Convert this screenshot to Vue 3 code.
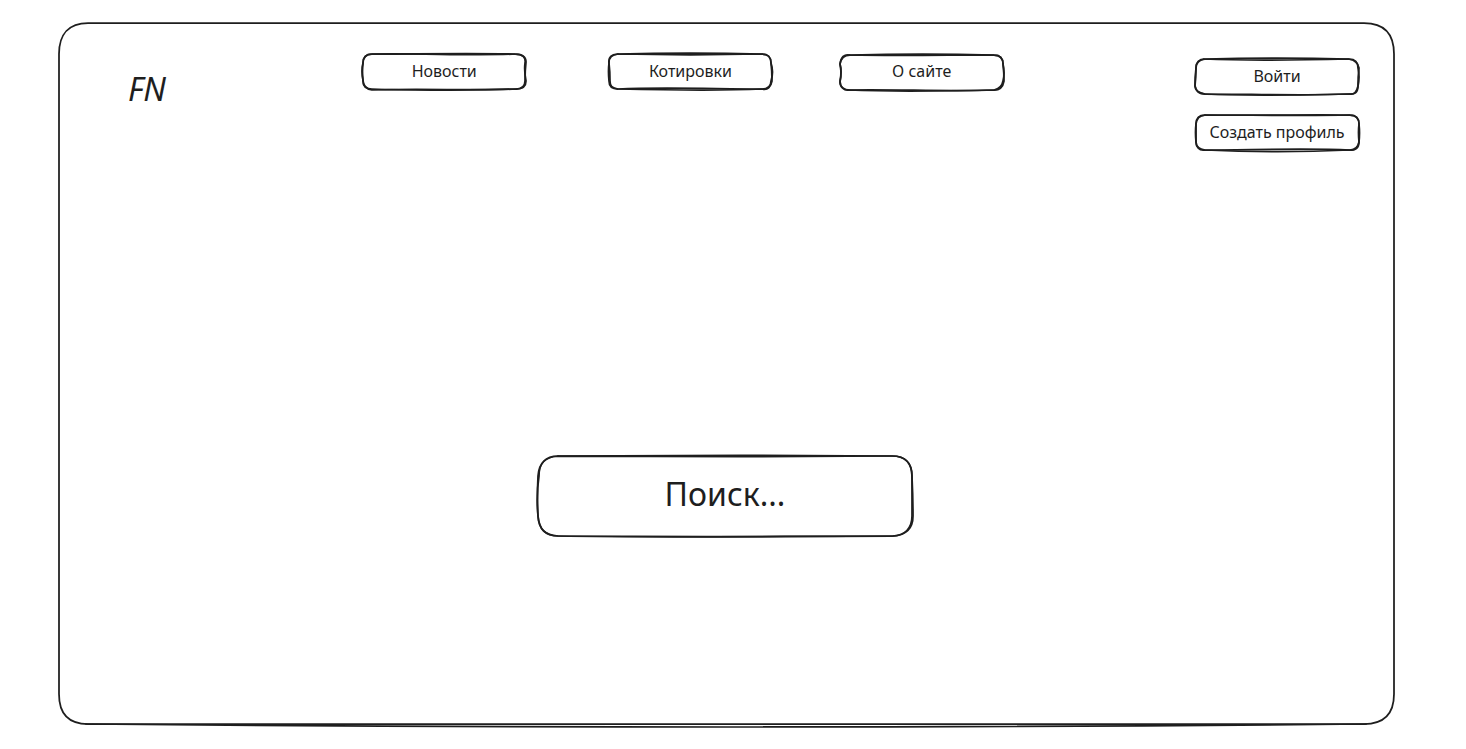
<script setup>
import { ref } from 'vue'

const query = ref('')

const links = [
  {
    label: 'Новости',
    strokes: [
      'M10 1 C60 0 110 3 154 1 C161 1 164 5 163 10 Q162 18 164 28 C164 34 160 36 154 36 C110 38 60 35 10 37 C4 36 1 33 1 27 Q-1 18 1 10 C1 4 4 1 10 1',
      'M9 1 C50 1 110 0 153 1 C160 1 164 4 164 9 Q163 18 163 28 C163 34 159 36 154 36 C110 37 55 38 10 36 C4 36 1 33 1 28 Q0 18 1 10 C1 5 4 1 9 1',
    ],
  },
  {
    label: 'Котировки',
    strokes: [
      'M9 1 C55 0 110 0 154 1 C161 1 163 4 163 10 Q166 19 163 28 C163 34 160 36 154 36 C110 36 55 34 10 36 C4 36 1 33 1 28 Q0 18 1 10 C0 4 4 1 9 1',
      'M10 1 C55 2 110 2 154 1 C160 1 163 5 163 10 Q164 18 164 28 C163 33 160 38 154 36 C110 38 55 37 10 36 C4 35 2 33 2 28 Q2 18 1 10 C1 4 4 2 10 1',
    ],
  },
  {
    label: 'О сайте',
    strokes: [
      'M10 2 C55 1 110 1 154 2 C160 2 163 5 163 11 Q164 20 164 28 C163 34 160 37 154 37 C110 38 55 39 9 37 C4 38 0 34 0 28 Q2 19 0 11 C1 5 4 2 10 2',
      'M10 2 C55 3 110 2 154 2 C161 2 163 6 163 11 Q165 20 163 28 C162 34 159 36 154 37 C110 39 55 36 10 37 C4 37 0 34 0 29 Q2 19 0 11 C1 4 4 1 10 2',
    ],
  },
]

const accountLinks = [
  {
    label: 'Войти',
    strokes: [
      'M10 1 C55 0 110 0 154 1 C161 1 163 4 163 10 Q165 19 163 28 C163 34 160 37 154 36 C110 37 55 38 10 36 C4 36 1 33 0 28 Q0 18 1 10 C1 4 4 1 10 1',
      'M9 1 C55 3 110 2 154 1 C159 2 163 5 164 10 Q163 18 163 28 C162 34 159 37 154 36 C110 38 55 36 10 36 C4 35 0 33 0 28 Q1 18 1 10 C1 4 5 2 9 1',
    ],
  },
  {
    label: 'Создать профиль',
    strokes: [
      'M10 1 C55 2 110 0 155 1 C161 1 164 4 164 10 Q165 19 164 28 C164 34 160 37 155 36 C110 34 55 36 10 36 C4 37 1 33 1 28 Q1 18 1 10 C1 4 4 1 10 1',
      'M10 1 C55 1 110 2 155 1 C161 1 164 5 164 10 Q163 18 164 28 C163 33 160 36 155 36 C110 38 55 38 10 36 C4 35 1 33 1 28 Q0 18 1 10 C2 4 4 2 10 1',
    ],
  },
]
</script>

<template>
  <div class="page">
    <div class="frame">
      <svg class="outline" viewBox="0 0 1336 704" preserveAspectRatio="none" aria-hidden="true">
        <path d="M30 1 H1306 C1326 1 1336 12 1336 32 V672 C1336 692 1326 702 1306 702 H30 C11 702 1 692 1 672 V32 C1 12 11 1 30 1" />
        <path d="M28 702 Q668 708 1308 702" />
      </svg>

      <header class="header">
        <a class="logo" href="#">FN</a>
        <nav class="nav" aria-label="Разделы">
          <button v-for="item in links" :key="item.label" class="button" type="button">
            <svg class="outline" viewBox="0 0 164 38" preserveAspectRatio="none" aria-hidden="true">
              <path v-for="stroke in item.strokes" :key="stroke" :d="stroke" />
            </svg>
            {{ item.label }}
          </button>
        </nav>
        <div class="account">
          <button v-for="item in accountLinks" :key="item.label" class="button" type="button">
            <svg class="outline" viewBox="0 0 164 38" preserveAspectRatio="none" aria-hidden="true">
              <path v-for="stroke in item.strokes" :key="stroke" :d="stroke" />
            </svg>
            {{ item.label }}
          </button>
        </div>
      </header>

      <form class="search" role="search" @submit.prevent>
        <svg class="outline" viewBox="0 0 376 82" preserveAspectRatio="none" aria-hidden="true">
          <path d="M21 1 C120 0 250 0 355 1 C369 1 375 8 375 22 Q376 42 376 61 C376 74 369 80 356 81 C250 82 130 82 21 81 C8 80 2 75 1 61 Q-1 41 2 21 C2 8 8 2 21 1" />
          <path d="M21 1 C120 2 250 2 355 1 C368 1 375 7 375 21 Q375 41 375 61 C375 73 368 81 355 81 C250 81 130 83 21 81 C8 81 2 74 1 61 Q0 41 1 21 C2 8 9 1 21 1" />
        </svg>
        <input v-model="query" class="search-input" type="text" aria-label="Поиск" placeholder="Поиск..." />
      </form>
    </div>
  </div>
</template>

<style>
body {
  margin: 0;
  background: #ffffff;
}
</style>

<style scoped>
.page {
  box-sizing: border-box;
  display: grid;
  min-height: 100vh;
  padding: 22px 72px 23px 58px;
  color: #1e1e1e;
  font-family: "Noto Sans", "Open Sans", sans-serif;
}

.frame {
  position: relative;
  display: grid;
  grid-template-rows: auto 8fr auto 5fr;
}

.outline {
  position: absolute;
  inset: 0;
  width: 100%;
  height: 100%;
  overflow: visible;
  fill: none;
  stroke: #1e1e1e;
  stroke-width: 1.75;
  stroke-linecap: round;
  pointer-events: none;
}

.outline path {
  vector-effect: non-scaling-stroke;
}

.header {
  display: grid;
  grid-template-columns: 234fr 832fr 164px;
  padding: 31px 35px 0 70px;
}

.logo {
  justify-self: start;
  align-self: start;
  margin-top: 16px;
  color: inherit;
  font-size: 32px;
  font-style: italic;
  line-height: 40px;
  text-decoration: none;
}

.nav {
  display: grid;
  grid-template-columns: 246fr 231fr 355fr;
  align-items: start;
}

.account {
  display: grid;
  gap: 18px;
  padding-top: 5px;
}

.button {
  position: relative;
  width: 164px;
  height: 38px;
  padding: 0 0 2px;
  border: 0;
  background: transparent;
  color: inherit;
  font: inherit;
  font-size: 16px;
  line-height: 24px;
  white-space: nowrap;
  cursor: pointer;
}

.search {
  position: relative;
  grid-row: 3;
  justify-self: center;
  width: 376px;
  max-width: 90%;
  height: 82px;
  margin-right: 2px;
}

.search-input {
  box-sizing: border-box;
  width: 100%;
  height: 100%;
  padding: 0 20px 4px;
  border: 0;
  outline: 0;
  background: transparent;
  color: inherit;
  font: inherit;
  font-size: 32px;
  text-align: center;
}

.search-input::placeholder {
  color: #1e1e1e;
  opacity: 1;
}
</style>
